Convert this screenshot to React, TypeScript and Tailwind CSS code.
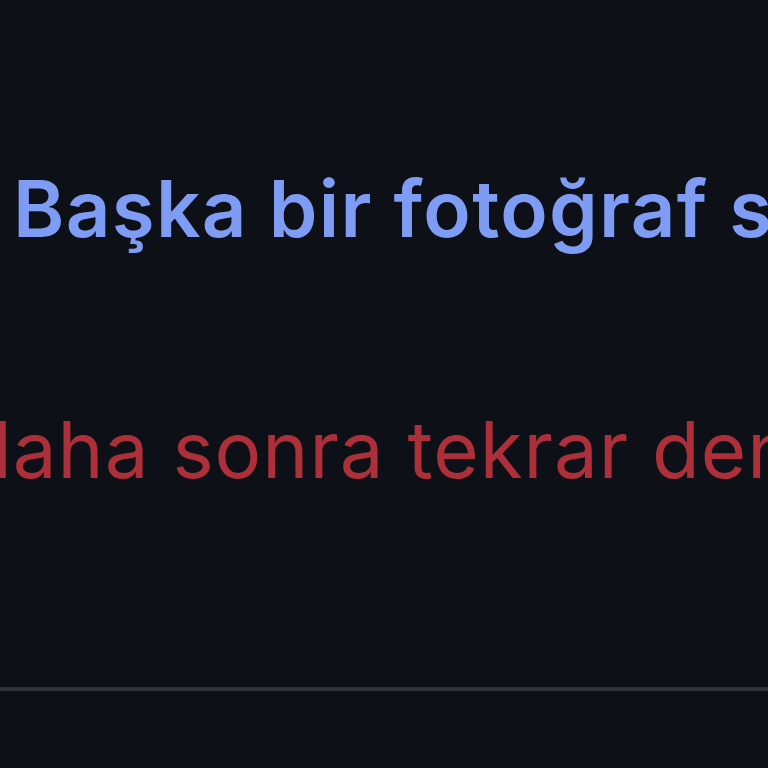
export default function App() {
  return (
    <div className="w-[768px] h-[768px] bg-[#0d1117] overflow-hidden flex flex-col" style={{ fontFamily: "Inter, 'Noto Sans', sans-serif" }}>
      <div className="mt-[170px] ml-[13px] whitespace-nowrap text-[78px] leading-none font-semibold tracking-[1.3px] text-[#7f9cf5]">
        Başka bir fotoğraf seçin
      </div>
      <div className="mt-[163px] ml-[-36px] whitespace-nowrap text-[78px] leading-none tracking-[1px] text-[#ad2f39]">
        daha sonra tekrar deneyin
      </div>
      <div className="mt-[198px] h-[4px] bg-[#2e3239]" />
    </div>
  );
}
